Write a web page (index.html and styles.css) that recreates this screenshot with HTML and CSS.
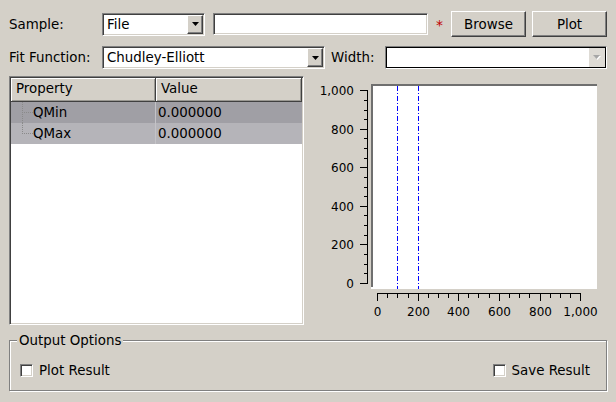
FILE: index.html
```html
<!DOCTYPE html>
<html>
<head>
<meta charset="utf-8">
<link rel="stylesheet" href="styles.css">
</head>
<body>
<div class="app">
  <div class="row row1">
    <span class="lbl">Sample:</span>
    <div class="combo combo-file sunken">
      <span class="combo-text">File</span>
      <span class="arrow-btn"><svg width="7" height="4" viewBox="0 0 7 4"><polygon points="0,0 7,0 3.5,4" fill="#000"/></svg></span>
    </div>
    <div class="text-input sunken"></div>
    <span class="star">*</span>
    <button class="btn">Browse</button>
    <button class="btn">Plot</button>
  </div>
  <div class="row row2">
    <span class="lbl">Fit Function:</span>
    <div class="combo combo-fit sunken">
      <span class="combo-text">Chudley-Elliott</span>
      <span class="arrow-btn"><svg width="7" height="4" viewBox="0 0 7 4"><polygon points="0,0 7,0 3.5,4" fill="#000"/></svg></span>
    </div>
    <span class="lbl lbl-w">Width:</span>
    <div class="combo combo-width sunken">
      <span class="combo-text"></span>
      <span class="arrow-btn arrow-disabled"><svg width="8" height="5" viewBox="0 0 8 5"><polygon points="1,1 8,1 4.5,5" fill="#fff"/><polygon points="0,0 7,0 3.5,4" fill="#a6a6a6"/></svg></span>
    </div>
  </div>
  <div class="main">
    <div class="table sunken">
      <div class="thead">
        <div class="th th-prop">Property</div>
        <div class="th th-val">Value</div>
      </div>
      <div class="tr tr-a">
        <div class="td-prop"><span class="tree tree-mid"></span>QMin</div>
        <div class="td-val">0.000000</div>
      </div>
      <div class="tr tr-b">
        <div class="td-prop"><span class="tree tree-end"></span>QMax</div>
        <div class="td-val">0.000000</div>
      </div>
    </div>
    <svg class="plot" width="303" height="249" viewBox="304 76 303 249">
      <rect x="371" y="84" width="226" height="205" fill="#fff"/>
      <rect x="371" y="84" width="226" height="2" fill="#6f6f6f"/>
      <rect x="371" y="84" width="2" height="203" fill="#6f6f6f"/>
      <path d="M397.5 86V289M418.5 86V289" stroke="#0000ff" stroke-width="1" stroke-dasharray="5 2 1 2" fill="none"/>
      <path d="M367.5 90V284M360 283.5H368M360 244.5H368M360 206.5H368M360 167.5H368M360 129.5H368M360 90.5H368M364 273.5H368M364 264.5H368M364 254.5H368M364 235.5H368M364 225.5H368M364 215.5H368M364 196.5H368M364 187.5H368M364 177.5H368M364 158.5H368M364 148.5H368M364 138.5H368M364 119.5H368M364 110.5H368M364 100.5H368" stroke="#000" stroke-width="1" fill="none"/>
      <path d="M377 293.5H581M377.5 293V301M418.5 293V301M458.5 293V301M499.5 293V301M540.5 293V301M580.5 293V301M387.5 293V298M397.5 293V298M408.5 293V298M428.5 293V298M438.5 293V298M448.5 293V298M468.5 293V298M478.5 293V298M489.5 293V298M509.5 293V298M519.5 293V298M529.5 293V298M550.5 293V298M560.5 293V298M570.5 293V298" stroke="#000" stroke-width="1" fill="none"/>
      <g class="axis-label" text-anchor="end">
        <text x="354" y="288">0</text>
        <text x="354" y="249">200</text>
        <text x="354" y="211">400</text>
        <text x="354" y="172">600</text>
        <text x="354" y="134">800</text>
        <text x="354" y="95">1,000</text>
      </g>
      <g class="axis-label" text-anchor="middle">
        <text x="377.5" y="316">0</text>
        <text x="418.5" y="316">200</text>
        <text x="458.5" y="316">400</text>
        <text x="499.5" y="316">600</text>
        <text x="540.5" y="316">800</text>
        <text x="580.5" y="316">1,000</text>
      </g>
    </svg>
  </div>
  <fieldset class="group">
    <legend>Output Options</legend>
    <div class="opts">
      <label class="check"><span class="cb"></span>Plot Result</label>
      <label class="check"><span class="cb"></span>Save Result</label>
    </div>
  </fieldset>
</div>
</body>
</html>
```

FILE: styles.css
```css
html, body {
  margin: 0;
  padding: 0;
}
body {
  background: #d4d0c8;
  font-family: "DejaVu Sans", sans-serif;
  font-size: 13.4px;
  color: #000;
}
.app {
  width: 616px;
  height: 402px;
  box-sizing: border-box;
  padding: 11px 9px 0 9px;
  display: flex;
  flex-direction: column;
}
.row {
  display: flex;
  align-items: center;
  flex: none;
}
.row1 { height: 26px; }
.row2 { height: 23px; margin-top: 9px; }
.lbl {
  width: 93px;
  flex: none;
  line-height: 15px;
  white-space: nowrap;
}
.lbl-w {
  width: 54px;
  margin-left: 6px;
}
.sunken {
  box-sizing: border-box;
  background: #fff;
  border: 1px solid;
  border-color: #808080 #fff #fff #808080;
  box-shadow: inset 1px 1px 0 #404040, inset -1px -1px 0 #d4d0c8;
}
.combo {
  display: flex;
  align-items: stretch;
  height: 23px;
  padding: 1px;
  flex: none;
}
.combo-text {
  flex: 1;
  padding-left: 3px;
  line-height: 19px;
  white-space: nowrap;
  overflow: hidden;
}
.arrow-btn {
  width: 16px;
  flex: none;
  box-sizing: border-box;
  background: #d4d0c8;
  border: 1px solid;
  border-color: #fff #404040 #404040 #fff;
  box-shadow: inset -1px -1px 0 #808080;
  display: flex;
  align-items: center;
  justify-content: center;
}
.arrow-btn svg { display: block; }
.arrow-disabled {
  background: #dedbd5;
  border-color: #dedbd5;
  box-shadow: none;
}
.combo-file { width: 103px; }
.combo-fit { width: 223px; }
.combo-width {
  width: 222px;
  box-shadow: inset 0 0 0 1px #000;
}
.text-input {
  width: 215px;
  height: 22px;
  margin-left: 8px;
  flex: none;
}
.star {
  width: 23px;
  flex: none;
  text-align: center;
  color: #c00000;
  font-size: 14px;
  line-height: 15px;
  margin-top: 3px;
}
.btn {
  width: 75px;
  height: 26px;
  flex: none;
  box-sizing: border-box;
  padding: 0;
  margin: 0;
  background: #d4d0c8;
  border: 1px solid;
  border-color: #fff #404040 #404040 #fff;
  box-shadow: inset -1px -1px 0 #808080;
  font: inherit;
  color: #000;
}
.btn + .btn { margin-left: 6px; }

.main {
  display: flex;
  margin-top: 7px;
  height: 249px;
  flex: none;
}
.table {
  width: 295px;
  height: 249px;
  padding: 1px;
  display: flex;
  flex-direction: column;
  flex: none;
}
.thead {
  display: flex;
  height: 24px;
  flex: none;
  background: #d4d0c8;
}
.th {
  box-sizing: border-box;
  height: 24px;
  line-height: 22px;
  padding-left: 5px;
  border-right: 1px solid #404040;
  border-bottom: 1px solid #404040;
  box-shadow: inset 1px 1px 0 #fff, inset -1px -1px 0 #9a9892;
}
.th-prop { width: 145px; }
.th-val { width: 146px; }
.tr {
  display: flex;
  height: 21px;
  line-height: 21px;
  flex: none;
}
.tr-a { background: #a09fa5; }
.tr-b { background: #b5b4b9; }
.td-prop {
  width: 145px;
  box-sizing: border-box;
  padding-left: 10px;
  display: flex;
  border-right: 1px solid #c4c3c7;
}
.td-val { padding-left: 2px; }
.tree {
  width: 12px;
  height: 21px;
  flex: none;
}
.tree-mid {
  background:
    repeating-linear-gradient(to bottom, #8a8a8a 0 1px, transparent 1px 2px) 1px 0 / 1px 21px no-repeat,
    repeating-linear-gradient(to right, #8a8a8a 0 1px, transparent 1px 2px) 3px 10px / 9px 1px no-repeat;
}
.tree-end {
  background:
    repeating-linear-gradient(to bottom, #8a8a8a 0 1px, transparent 1px 2px) 1px 0 / 1px 11px no-repeat,
    repeating-linear-gradient(to right, #8a8a8a 0 1px, transparent 1px 2px) 3px 10px / 9px 1px no-repeat;
}
.plot {
  display: block;
  flex: none;
}
.axis-label {
  font-family: "DejaVu Sans", sans-serif;
  font-size: 12px;
  fill: #000;
}

.group {
  margin: 8px 0 0 0;
  padding: 0 16px 0 10px;
  height: 58px;
  box-sizing: border-box;
  border: 1px solid #808080;
  box-shadow: inset 1px 1px 0 #fff, 1px 1px 0 #fff;
  min-width: 0;
  flex: none;
}
.group legend {
  padding: 0 2px;
  margin-left: -3px;
  line-height: 15px;
  background: #d4d0c8;
}
.opts {
  display: flex;
  justify-content: space-between;
  align-items: center;
  height: 17px;
  margin-top: 14px;
}
.check {
  display: flex;
  align-items: center;
  gap: 6px;
  line-height: 15px;
}
.cb {
  width: 13px;
  height: 13px;
  box-sizing: border-box;
  background: #fff;
  border: 1px solid;
  border-color: #808080 #fff #fff #808080;
  box-shadow: inset 1px 1px 0 #404040, inset -1px -1px 0 #d4d0c8;
}
```
